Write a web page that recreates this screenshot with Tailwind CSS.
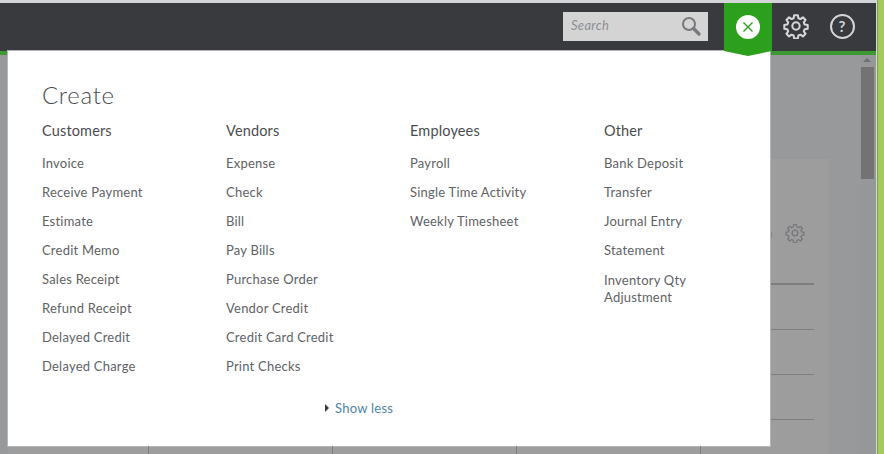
<!DOCTYPE html>
<html>

<head>
    <title>Create</title>
    <script src="https://cdn.jsdelivr.net/npm/@tailwindcss/browser@4"></script>
    <meta name="viewport" content="width=device-width, initial-scale=1.0">
</head>

<body class="relative w-[884px] h-[454px] overflow-hidden bg-[#98999a] font-['Lato',sans-serif]">
    <!-- Page behind the menu -->
    <div class="flex h-full flex-col border-t-[3px] border-[#d4d5d8] pr-[8px]">
        <!-- Top bar -->
        <div class="flex h-[48px] shrink-0 items-center justify-end bg-[#393a3d] pb-[2px]">
            <div class="flex h-[29px] w-[145px] items-center justify-between bg-[#d4d4d4] pl-2 pr-[7px]">
                <span class="text-[13px] italic tracking-[0.3px] text-[#8d9096]">Search</span>
                <svg width="20" height="20" viewBox="0 0 20 20" fill="none" stroke="#77797c">
                    <circle cx="8" cy="8" r="6" stroke-width="2" />
                    <path d="M12.5 12.5 18 18" stroke-width="3.2" stroke-linecap="round" />
                </svg>
            </div>
            <div class="w-[16px]"></div>
            <div class="w-[48px]"></div>
            <div class="flex w-[48px] justify-center">
                <svg width="26" height="26" viewBox="0 0 24 24" fill="none" stroke="#d4d5d8" stroke-width="1.9">
                    <circle cx="12" cy="12" r="3.4" />
                    <path d="M10.3 2h3.4l.5 2.8 1.9.8 2.3-1.6 2.4 2.4-1.6 2.3.8 1.9 2.8.5v3.4l-2.8.5-.8 1.9 1.6 2.3-2.4 2.4-2.3-1.6-1.9.8-.5 2.8h-3.4l-.5-2.8-1.9-.8-2.3 1.6-2.4-2.4 1.6-2.3-.8-1.9-2.8-.5v-3.4l2.8-.5.8-1.9-1.6-2.3 2.4-2.4 2.3 1.6 1.9-.8z" stroke-linejoin="round" />
                </svg>
            </div>
            <div class="flex w-[44px] justify-center">
                <div class="flex h-[25px] w-[25px] items-center justify-center rounded-full border-2 border-[#d4d5d8] text-[15px] font-bold leading-none text-[#d4d5d8]">?</div>
            </div>
            <div class="w-[12px]"></div>
        </div>
        <div class="h-[4px] shrink-0 bg-[#3d9a32]"></div>

        <!-- Dimmed content -->
        <div class="flex min-h-0 flex-1">
            <div class="relative flex-1 pt-[104px]">
                <div class="ml-[8px] h-full w-[821px] bg-[#9d9d9d] pt-[64px]">
                    <div class="flex justify-end pr-[24px]">
                        <svg width="20" height="20" viewBox="0 0 24 24" fill="none" stroke="#77797c" stroke-width="1.6">
                            <circle cx="12" cy="12" r="3.4" />
                            <path d="M10.3 2h3.4l.5 2.8 1.9.8 2.3-1.6 2.4 2.4-1.6 2.3.8 1.9 2.8.5v3.4l-2.8.5-.8 1.9 1.6 2.3-2.4 2.4-2.3-1.6-1.9.8-.5 2.8h-3.4l-.5-2.8-1.9-.8-2.3 1.6-2.4-2.4 1.6-2.3-.8-1.9-2.8-.5v-3.4l2.8-.5.8-1.9-1.6-2.3 2.4-2.4 2.3 1.6 1.9-.8z" stroke-linejoin="round" />
                        </svg>
                    </div>
                    <div class="mt-[40px] mr-[15px] h-[46px] border-t-2 border-[#7d7e7f]"></div>
                    <div class="mr-[15px] h-[45px] border-t border-[#7d7e7f]"></div>
                    <div class="mr-[15px] h-[45px] border-t border-[#7d7e7f]"></div>
                    <div class="mr-[15px] h-[45px] border-t border-[#7d7e7f]"></div>
                </div>
            </div>
            <!-- Scrollbar -->
            <div class="flex w-[16px] shrink-0 flex-col items-center bg-[#969798] pr-[2px] pt-[3px]">
                <div class="h-0 w-0 border-x-[4px] border-b-[4px] border-x-transparent border-b-[#6f7072]"></div>
                <div class="mt-[5px] h-[112px] w-[13px] bg-[#737373]"></div>
            </div>
        </div>
    </div>
    <!-- Window edge -->
    <div class="absolute right-0 top-0 h-full w-[8px] border-l border-[#d9dad6] bg-[#a3cb5c]">
        <div class="h-full w-px bg-[#7fa646]"></div>
    </div>

    <!-- Create menu -->
    <div class="absolute left-[8px] top-[51px] h-[395px] w-[762px] bg-white pl-[34px] pt-[30px] text-[#4b4c4f] shadow-[0_0_0_1px_#b5b6b7]">
        <h1 class="text-[24px] font-light leading-[28px] tracking-[0.7px] text-[#4b4c4f]">Create</h1>
        <div class="mt-[12px] flex">
            <div class="w-[184px]">
                <h2 class="text-[14.5px] leading-[20px] tracking-[0.15px]">Customers</h2>
                <ul class="mt-[8px] text-[13px] leading-[29px] tracking-[0.22px] text-[#616265]">
                    <li>Invoice</li>
                    <li>Receive Payment</li>
                    <li>Estimate</li>
                    <li>Credit Memo</li>
                    <li>Sales Receipt</li>
                    <li>Refund Receipt</li>
                    <li>Delayed Credit</li>
                    <li>Delayed Charge</li>
                </ul>
            </div>
            <div class="w-[184px]">
                <h2 class="text-[14.5px] leading-[20px] tracking-[0.15px]">Vendors</h2>
                <ul class="mt-[8px] text-[13px] leading-[29px] tracking-[0.22px] text-[#616265]">
                    <li>Expense</li>
                    <li>Check</li>
                    <li>Bill</li>
                    <li>Pay Bills</li>
                    <li>Purchase Order</li>
                    <li>Vendor Credit</li>
                    <li>Credit Card Credit</li>
                    <li>Print Checks</li>
                </ul>
            </div>
            <div class="w-[194px]">
                <h2 class="text-[14.5px] leading-[20px] tracking-[0.15px]">Employees</h2>
                <ul class="mt-[8px] text-[13px] leading-[29px] tracking-[0.22px] text-[#616265]">
                    <li>Payroll</li>
                    <li>Single Time Activity</li>
                    <li>Weekly Timesheet</li>
                </ul>
            </div>
            <div class="w-[110px]">
                <h2 class="text-[14.5px] leading-[20px] tracking-[0.15px]">Other</h2>
                <ul class="mt-[8px] text-[13px] leading-[29px] tracking-[0.22px] text-[#616265]">
                    <li>Bank Deposit</li>
                    <li>Transfer</li>
                    <li>Journal Entry</li>
                    <li>Statement</li>
                    <li class="pt-[7px] leading-[17px]">Inventory Qty Adjustment</li>
                </ul>
            </div>
        </div>
        <div class="mt-[18px] flex items-center pl-[283px] text-[13px] leading-[18px] tracking-[0.25px] text-[#4f83a8]">
            <span class="mr-[6px] h-0 w-0 border-y-[4px] border-l-[4px] border-y-transparent border-l-[#393a3d]"></span>
            Show less
        </div>
    </div>

    <!-- Close tab, sits over the menu edge -->
    <div class="absolute left-[724px] top-[3px] flex h-[53px] w-[48px] items-center justify-center bg-[#2ca01c] pb-[5px] [clip-path:polygon(0_0,100%_0,100%_90.5%,50%_100%,0_90.5%)]">
        <div class="flex h-[24px] w-[24px] items-center justify-center rounded-full bg-white">
            <svg width="12" height="12" viewBox="0 0 12 12" stroke="#2ca01c" stroke-width="1.4">
                <path d="M1.5 1.5 10.5 10.5M10.5 1.5 1.5 10.5" />
            </svg>
        </div>
    </div>

    <!-- Cut off glyph peeking past the menu -->
    <div class="absolute left-[771px] top-[232px] h-[6px] w-px bg-[#85868a]"></div>

    <!-- Table columns below the menu -->
    <div class="absolute bottom-0 left-[148px] h-[8px] w-px bg-[#7d7e7f]"></div>
    <div class="absolute bottom-0 left-[332px] h-[8px] w-px bg-[#7d7e7f]"></div>
    <div class="absolute bottom-0 left-[516px] h-[8px] w-px bg-[#7d7e7f]"></div>
    <div class="absolute bottom-0 left-[700px] h-[8px] w-px bg-[#7d7e7f]"></div>
</body>

</html>
